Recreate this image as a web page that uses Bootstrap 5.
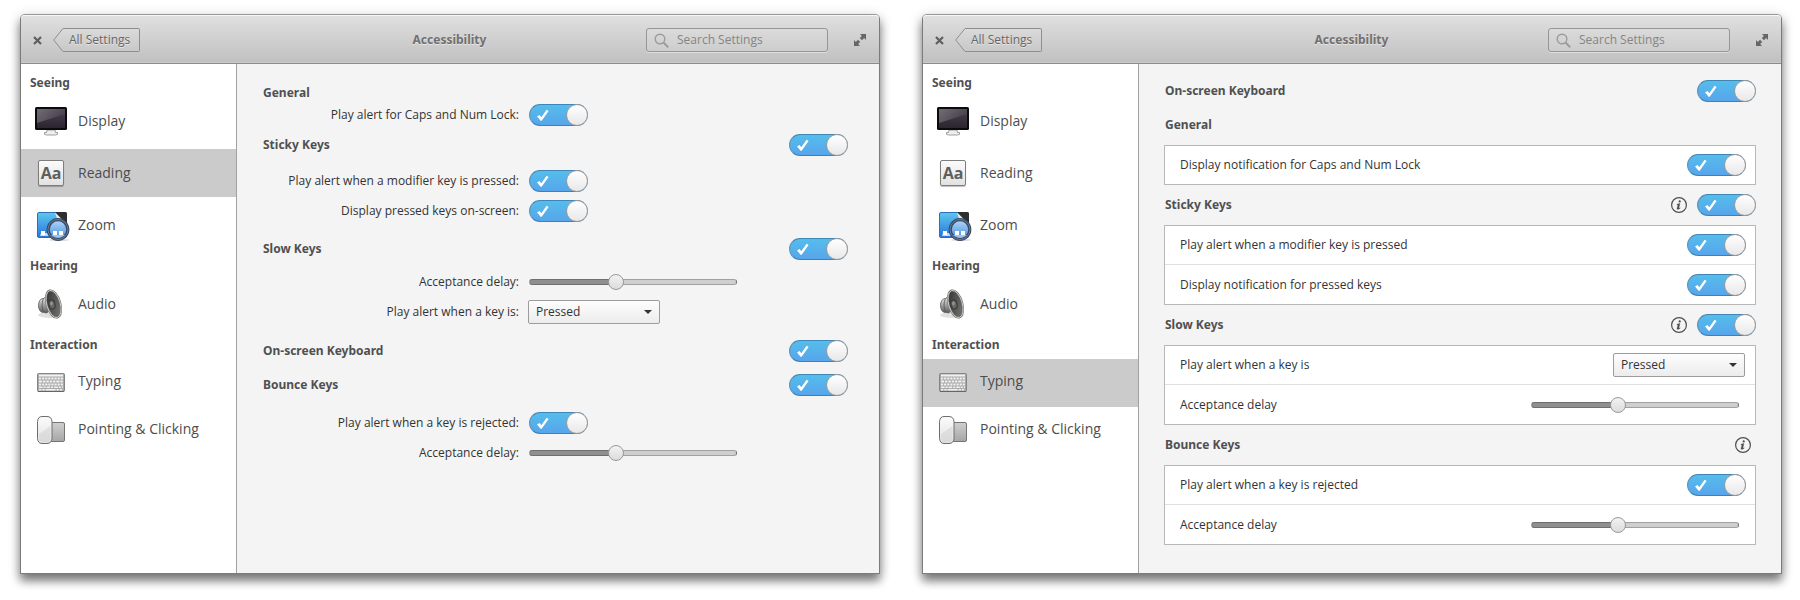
<!DOCTYPE html>
<html lang="en">
<head>
<meta charset="utf-8">
<meta name="viewport" content="width=device-width, initial-scale=1">
<title>Accessibility</title>
<link href="https://cdn.jsdelivr.net/npm/bootstrap@5.3.0/dist/css/bootstrap.min.css" rel="stylesheet">
<style>
body{font-family:"Open Sans","Noto Sans",sans-serif;font-size:12px;line-height:16px;color:#333;background:#fff}
.desk{min-height:100vh;padding:14px 18px 26px 20px;gap:42px}
.win{flex:1 1 0;min-width:0;border:1px solid #7b7b7b;border-top-color:#999;border-radius:5px 5px 0 0;background:#f4f4f4;
  box-shadow:0 7px 10px rgba(0,0,0,.48),0 2px 14px rgba(0,0,0,.16)}
.titlebar{display:grid;grid-template-columns:1fr auto 1fr;height:49px;padding:2px 13px 0 12px;border-bottom:1px solid #8b8b8b;
  border-radius:4px 4px 0 0;background:linear-gradient(#e0e0e0,#c0c0c0);box-shadow:inset 0 1px #f6f6f6,inset 0 -1px #cbcbcb}
.titlebar h1,.side h2,.pane h3{font-family:"Noto Sans","Open Sans",sans-serif;font-size:12px;line-height:16px;font-weight:700}
.titlebar h1{color:#707070;text-shadow:0 1px rgba(255,255,255,.5)}
.plain{border:0;background:none;padding:0;display:flex;color:#666}
.back{border:0;background:none;padding:0 0 0 3px;height:24px;display:flex;color:#666;text-shadow:0 1px rgba(255,255,255,.5)}
.back .face{height:24px;line-height:21px;padding:0 9px 0 6px;border:1px solid #8e8e8e;border-left:0;border-radius:0 2px 2px 0;
  background:linear-gradient(#dadada,#c8c8c8)}
.search{width:182px;height:24px;border:1px solid #969696;border-radius:3px;margin-right:26px;padding:0 8px 0 7px;gap:8px;background:rgba(255,255,255,.1);
  box-shadow:0 1px rgba(255,255,255,.4)}
.search input{border:0;background:none;outline:0;padding:0;min-width:0;flex:1;color:#666}
.search input::placeholder{color:#858585;opacity:1}
.side{flex:0 0 216px;background:#fff;border-right:1px solid #a0a0a0;padding-top:2px}
.side h2{color:#505050;margin:0;padding:9px 9px 6px}
.places{gap:4px}
.places a{height:48px;padding-left:14px;gap:11px;font-size:14px;line-height:20px;color:#4d4d4d;text-decoration:none}
.places a.active{background:#cbcbcb}
.places.tight{gap:0}
.places.tight span{padding-bottom:4px}
.places .glass{margin-right:-4px}
.places .letters{width:26px;height:26px;margin:0 3px;border:1px solid #7d7d7d;border-radius:2px;background:linear-gradient(#fbfbfb,#e2e2e2);
  box-shadow:0 1px 1px rgba(0,0,0,.25);font-size:16px;line-height:24px;font-weight:700;color:#5e5e5e}
.pane{flex:1;min-width:0}
.pane h3{color:#505050;margin:0 0 0 1px}
.rows{padding:21px 31px 0 25px}
.rows .bar{min-height:22px}
.rows section+section{margin-top:16px}
.rows section.near{margin-top:8px}
.rows section.mid{margin-top:12px}
.fields{display:grid;gap:8px 10px;grid-template-columns:257px 1fr;align-items:center;margin-top:14px}
.fields.first{margin-top:3px}
.fields.snug{margin-top:11px;row-gap:7px}
.fields label{text-align:right}
.fields>div{min-height:22px;display:flex;align-items:center}
.boxes{padding:16px 25px 0}
.boxes .bar{min-height:22px;margin-bottom:9px;gap:10px}
.boxes .bar.first{margin-bottom:12px}
.boxes .listbox{margin-bottom:9px;border:1px solid #b8b8b8;background:#fff}
.listbox .opt{min-height:39px;padding:0 9px 0 15px;border-bottom:1px solid #e0e0e0}
.listbox .opt:last-child{border:0}
.listbox .opt:only-child{min-height:38px}
.listbox .slide{margin-right:7px}
.toggle.form-check-input{appearance:none;-webkit-appearance:none;margin:0;float:none;flex:none;width:59px;height:22px;border:1px solid #a5a5a5;border-radius:11px;background-color:#ddd;
  background-image:none;position:relative;display:block}
.toggle.form-check-input:checked{border-color:#3f86b5 #8faabd #3b82b8 #5a95bb;
  background:url("data:image/svg+xml,%3Csvg xmlns='http://www.w3.org/2000/svg' viewBox='0 0 14 13'%3E%3Cpath d='M1 7.5l2.6-1.6 1.7 2.3L10.600 .8l2 1.200L5.700 11.800H4.600z' fill='%23fff'/%3E%3C/svg%3E") 6px 4px/14px 13px no-repeat,linear-gradient(#55bdec,#57a5ea)}
.toggle.form-check-input::after{content:"";position:absolute;top:-1px;left:-1px;width:22px;height:22px;border:1px solid #9b9b9b;border-radius:50%;background:linear-gradient(#fff,#e8e8e8)}
.toggle.form-check-input:checked::after{left:auto;right:-1px}
.slide{appearance:none;-webkit-appearance:none;display:block;width:208px;height:16px;margin:0;background:none}
.slide::-webkit-slider-runnable-track{height:6px;border:1px solid rgba(0,0,0,.22);border-radius:3px;
  background:linear-gradient(90deg,#8f8f8f 41%,#cfcfcf 41%)}
.slide::-webkit-slider-thumb{-webkit-appearance:none;width:16px;height:16px;margin-top:-6px;border:1px solid #9a9a9a;border-radius:50%;background:linear-gradient(#f2f2f2,#dcdcdc)}
.pick.form-select{width:132px;height:24px;padding:0 24px 0 7px;border:1px solid #9c9c9c;border-radius:2px;font-size:12px;line-height:16px;color:#333;
  background:url("data:image/svg+xml,%3Csvg xmlns='http://www.w3.org/2000/svg' viewBox='0 0 8 4'%3E%3Cpath d='M0 0h8L4 4z' fill='%23333'/%3E%3C/svg%3E") right 7px center/8px 4px no-repeat,linear-gradient(#fdfdfd,#ececec)}
.fields .pick{margin-left:-1px}
.listbox .pick{margin-right:1px}
.info-end{margin-right:5px}
</style>
</head>
<body>
<svg width="0" height="0" class="position-absolute" aria-hidden="true">
  <defs>
    <linearGradient id="gScreen" x1="0" y1="0" x2="0" y2="1"><stop offset="0" stop-color="#4a434f"/><stop offset="1" stop-color="#2c2530"/></linearGradient>
    <linearGradient id="gGlare" x1="0" y1="0" x2="1" y2="0"><stop offset="0" stop-color="#fff" stop-opacity=".22"/><stop offset="1" stop-color="#fff" stop-opacity=".04"/></linearGradient>
    <linearGradient id="gPaper" x1="0" y1="0" x2="0" y2="1"><stop offset="0" stop-color="#fbfbfb"/><stop offset="1" stop-color="#e2e2e2"/></linearGradient>
    <linearGradient id="gBlue" x1="0" y1="0" x2="0" y2="1"><stop offset="0" stop-color="#5bc8ec"/><stop offset="1" stop-color="#2a74dd"/></linearGradient>
    <linearGradient id="gLens" x1="0" y1="0" x2="0" y2="1"><stop offset="0" stop-color="#b4d9f8"/><stop offset="1" stop-color="#3e8ce2"/></linearGradient>
    <linearGradient id="gGrey" x1="0" y1="0" x2="0" y2="1"><stop offset="0" stop-color="#cfcfcf"/><stop offset="1" stop-color="#a6a6a6"/></linearGradient>
    <linearGradient id="gCone" x1="0" y1="0" x2="1" y2="1"><stop offset="0" stop-color="#2d2d2b"/><stop offset="1" stop-color="#7c7f78"/></linearGradient>
    <linearGradient id="gMetal" x1="0" y1="0" x2="0" y2="1"><stop offset="0" stop-color="#e8e8e8"/><stop offset=".5" stop-color="#a0a0a0"/><stop offset="1" stop-color="#5c5c5c"/></linearGradient>
    <linearGradient id="gBack" x1="0" y1="0" x2="0" y2="1"><stop offset="0" stop-color="#dadada"/><stop offset="1" stop-color="#c8c8c8"/></linearGradient>
  </defs>
  <symbol id="iDisplay" viewBox="0 0 32 32">
    <path d="M12 25h8l.5 2.500h2q1 2.500-2 2.500h-9q-3 0-2-2.500h2z" fill="#eee" stroke="#8b8b8b" stroke-width=".8"/>
    <rect x="0" y="2" width="32" height="23" rx="1.500" fill="#0c0a0d"/>
    <rect x="2" y="4" width="28" height="19" fill="url(#gScreen)"/>
    <path d="M2 4h28v5L2 18z" fill="url(#gGlare)"/>
  </symbol>
  <symbol id="iZoom" viewBox="0 0 36 32">
    <rect x="2.500" y="3.500" width="29" height="25" rx="1.500" fill="url(#gBlue)" stroke="#2c6fb8"/>
    <path d="M20 3h10.500q1.500 0 1.500 1.500V16z" fill="#2d2f2f"/><path d="M20 3.500l12 12-9-3z" fill="#e9ecec"/>
    <path d="M5 27l1-3h22v3z" fill="#bfe0fa"/><rect x="6" y="22" width="4" height="4" fill="#fff"/>
    <ellipse cx="24" cy="31" rx="10" ry="1" fill="#000" opacity=".15"/>
    <circle cx="23" cy="20.500" r="9.800" fill="url(#gLens)" stroke="#3b4864" stroke-width="3.200"/>
    <circle cx="23" cy="20.500" r="10" fill="none" stroke="#7686a4" stroke-width=".8"/>
    <path d="M16 26h14l-1 1q-6 4-12 0z" fill="#b8daf8" opacity=".7"/>
    <rect x="18" y="22" width="4" height="4" fill="#fff"/><rect x="24" y="22" width="4" height="4" fill="#fff"/>
  </symbol>
  <symbol id="iAudio" viewBox="0 0 32 32">
    <ellipse cx="15" cy="27" rx="12" ry="3" fill="#000" opacity=".12"/>
    <ellipse cx="8" cy="17.500" rx="4.500" ry="7" fill="url(#gMetal)" stroke="#555" stroke-width=".8"/>
    <ellipse cx="11" cy="17" rx="4" ry="8" fill="url(#gMetal)" stroke="#555" stroke-width=".8"/>
    <path d="M13 9l5-6 5 26-8-5z" fill="#555"/>
    <ellipse cx="18.500" cy="16" rx="6.800" ry="14" transform="rotate(-16 18.500 16)" fill="url(#gCone)" stroke="#6d6d6d" stroke-width="2"/>
    <ellipse cx="18.500" cy="16" rx="6.800" ry="14" transform="rotate(-16 18.500 16)" fill="none" stroke="#cdcdcd" stroke-width=".9"/>
    <ellipse cx="17" cy="16.500" rx="3" ry="4.600" transform="rotate(-12 17 16.500)" fill="#666" stroke="#383838"/>
    <ellipse cx="16.500" cy="15.500" rx="1.200" ry="2" fill="#999"/>
  </symbol>
  <symbol id="iTyping" viewBox="0 0 32 32">
    <rect x="2.500" y="6.500" width="27" height="18" rx="1" fill="#a8a8a8" stroke="#858585"/>
    <path d="M3 24.500h26" stroke="#666"/>
    <g stroke="#f2f2f2" stroke-width="2"><path d="M4 8.500h24" stroke-width="2"/><path d="M4 11.500h24" stroke-dasharray="2.200 .9"/><path d="M4 14.500h24" stroke-dasharray="3.200 .9 2.400 .9 2.400 .9 2.400 .9 2.400 .9"/><path d="M4 17.500h24" stroke-dasharray="2.200 .9"/><path d="M4 20.200h24" stroke-dasharray="3.600 .9 2.200 .9" stroke-width="1.600"/><path d="M4 22.700h24" stroke-width="1.600" stroke-dasharray="2.400 .9 2.400 .9 10 .9"/></g>
  </symbol>
  <symbol id="iPointing" viewBox="0 0 32 32">
    <rect x="14.500" y="7.500" width="15" height="19" rx="1.500" fill="url(#gGrey)" stroke="#747474"/>
    <path d="M7 1.500h5q4.500 0 5 5v17q-.5 5-5 5H7q-4 0-4.500-5v-17q.5-5 4.500-5z" fill="url(#gPaper)" stroke="#6e6e6e"/>
    <path d="M4 19L15.500 11v12q-.5 4-4 4H7.500q-3 0-3.500-4z" fill="#d0d0d0" opacity=".5"/>
  </symbol>
  <symbol id="iClose" viewBox="0 0 9 9"><path d="M1 1l7 7M8 1L1 8" stroke="#5f5f5f" stroke-width="2.200" fill="none"/></symbol>
  <symbol id="iTip" viewBox="0 0 10 24"><path d="M10 0L0 12l10 12z" fill="url(#gBack)"/><path d="M10 .5L.700 12 10 23.500" fill="none" stroke="#8e8e8e"/></symbol>
  <symbol id="iFind" viewBox="0 0 15 15"><circle cx="6" cy="6" r="4.800" fill="none" stroke="#9c9c9c" stroke-width="1.400"/><path d="M9.500 9.500l4.700 4.700" stroke="#9c9c9c" stroke-width="2"/></symbol>
  <symbol id="iFull" viewBox="0 0 12 12"><path d="M6 0h6v6L10.100 4.100 8 6.200 5.800 4 7.900 1.900zM0 6l1.900 1.900L4 5.800 6.200 8 4.100 10.100 6 12H0z" fill="#666"/></symbol>
  <symbol id="iInfo" viewBox="0 0 16 16"><circle cx="8" cy="8" r="7.400" fill="none" stroke="#4f4f4f" stroke-width="1.200"/><circle cx="8.700" cy="4.400" r="1.100" fill="#4f4f4f"/><path d="M6.100 7.100l2.900-.5-1.200 4.700 1.400-.6-.2.700-2.100 1.100-1-.4 1-4.200-.9-.2z" fill="#4f4f4f" stroke="#4f4f4f" stroke-width=".3"/></symbol>
</svg>

<main class="desk d-flex">
  <!-- First window: reading -->
  <div class="win d-flex flex-column">
    <header class="titlebar align-items-center">
      <div class="d-flex align-items-center">
        <button class="plain" type="button" aria-label="Close"><svg width="9" height="9"><use href="#iClose"/></svg></button>
        <button class="back ms-2" type="button"><svg width="10" height="24"><use href="#iTip"/></svg><span class="face">All Settings</span></button>
      </div>
      <h1 class="m-0">Accessibility</h1>
      <div class="d-flex align-items-center justify-content-end">
        <div class="search d-flex align-items-center"><svg width="15" height="15"><use href="#iFind"/></svg><input type="search" placeholder="Search Settings" aria-label="Search Settings"></div>
        <button class="plain" type="button" aria-label="Maximize"><svg width="12" height="12"><use href="#iFull"/></svg></button>
      </div>
    </header>
    <div class="d-flex flex-grow-1">
      <nav class="side" aria-label="Categories">
        <h2>Seeing</h2>
        <div class="places d-flex flex-column">
          <a class="d-flex align-items-center" href="#"><svg width="32" height="32"><use href="#iDisplay"/></svg><span>Display</span></a>
          <a class="d-flex align-items-center active" href="#" aria-current="page"><span class="letters d-flex justify-content-center" aria-hidden="true">Aa</span><span>Reading</span></a>
          <a class="d-flex align-items-center" href="#"><svg width="36" height="32" class="glass"><use href="#iZoom"/></svg><span>Zoom</span></a>
        </div>
        <h2>Hearing</h2>
        <div class="places d-flex flex-column">
          <a class="d-flex align-items-center" href="#"><svg width="32" height="32"><use href="#iAudio"/></svg><span>Audio</span></a>
        </div>
        <h2>Interaction</h2>
        <div class="places tight d-flex flex-column">
          <a class="d-flex align-items-center" href="#"><svg width="32" height="32"><use href="#iTyping"/></svg><span>Typing</span></a>
          <a class="d-flex align-items-center" href="#"><svg width="32" height="32"><use href="#iPointing"/></svg><span>Pointing &amp; Clicking</span></a>
        </div>
      </nav>
      <div class="pane rows">
        <section>
          <div class="d-flex"><h3>General</h3></div>
          <div class="fields first">
            <label for="a1">Play alert for Caps and Num Lock:</label><div><input class="form-check-input toggle" type="checkbox" role="switch" id="a1" checked></div>
          </div>
        </section>
        <section class="near">
          <div class="bar d-flex align-items-center justify-content-between"><h3>Sticky Keys</h3><input class="form-check-input toggle" type="checkbox" role="switch" aria-label="Sticky Keys" checked></div>
          <div class="fields">
            <label for="a2">Play alert when a modifier key is pressed:</label><div><input class="form-check-input toggle" type="checkbox" role="switch" id="a2" checked></div>
            <label for="a3">Display pressed keys on-screen:</label><div><input class="form-check-input toggle" type="checkbox" role="switch" id="a3" checked></div>
          </div>
        </section>
        <section>
          <div class="bar d-flex align-items-center justify-content-between"><h3>Slow Keys</h3><input class="form-check-input toggle" type="checkbox" role="switch" aria-label="Slow Keys" checked></div>
          <div class="fields snug">
            <label for="a4">Acceptance delay:</label><div><input class="slide" type="range" id="a4" value="41"></div>
            <label for="a5">Play alert when a key is:</label><div><select class="form-select pick" id="a5"><option>Pressed</option><option>Accepted</option><option>Rejected</option></select></div>
          </div>
        </section>
        <section>
          <div class="bar d-flex align-items-center justify-content-between"><h3>On-screen Keyboard</h3><input class="form-check-input toggle" type="checkbox" role="switch" aria-label="On-screen Keyboard" checked></div>
        </section>
        <section class="mid">
          <div class="bar d-flex align-items-center justify-content-between"><h3>Bounce Keys</h3><input class="form-check-input toggle" type="checkbox" role="switch" aria-label="Bounce Keys" checked></div>
          <div class="fields mt-3">
            <label for="a6">Play alert when a key is rejected:</label><div><input class="form-check-input toggle" type="checkbox" role="switch" id="a6" checked></div>
            <label for="a7">Acceptance delay:</label><div><input class="slide" type="range" id="a7" value="41"></div>
          </div>
        </section>
      </div>
    </div>
  </div>

  <!-- Second window: typing -->
  <div class="win d-flex flex-column">
    <header class="titlebar align-items-center">
      <div class="d-flex align-items-center">
        <button class="plain" type="button" aria-label="Close"><svg width="9" height="9"><use href="#iClose"/></svg></button>
        <button class="back ms-2" type="button"><svg width="10" height="24"><use href="#iTip"/></svg><span class="face">All Settings</span></button>
      </div>
      <h1 class="m-0">Accessibility</h1>
      <div class="d-flex align-items-center justify-content-end">
        <div class="search d-flex align-items-center"><svg width="15" height="15"><use href="#iFind"/></svg><input type="search" placeholder="Search Settings" aria-label="Search Settings"></div>
        <button class="plain" type="button" aria-label="Maximize"><svg width="12" height="12"><use href="#iFull"/></svg></button>
      </div>
    </header>
    <div class="d-flex flex-grow-1">
      <nav class="side" aria-label="Categories">
        <h2>Seeing</h2>
        <div class="places d-flex flex-column">
          <a class="d-flex align-items-center" href="#"><svg width="32" height="32"><use href="#iDisplay"/></svg><span>Display</span></a>
          <a class="d-flex align-items-center" href="#"><span class="letters d-flex justify-content-center" aria-hidden="true">Aa</span><span>Reading</span></a>
          <a class="d-flex align-items-center" href="#"><svg width="36" height="32" class="glass"><use href="#iZoom"/></svg><span>Zoom</span></a>
        </div>
        <h2>Hearing</h2>
        <div class="places d-flex flex-column">
          <a class="d-flex align-items-center" href="#"><svg width="32" height="32"><use href="#iAudio"/></svg><span>Audio</span></a>
        </div>
        <h2>Interaction</h2>
        <div class="places tight d-flex flex-column">
          <a class="d-flex align-items-center active" href="#" aria-current="page"><svg width="32" height="32"><use href="#iTyping"/></svg><span>Typing</span></a>
          <a class="d-flex align-items-center" href="#"><svg width="32" height="32"><use href="#iPointing"/></svg><span>Pointing &amp; Clicking</span></a>
        </div>
      </nav>
      <div class="pane boxes">
        <div class="bar first d-flex align-items-center justify-content-between"><h3>On-screen Keyboard</h3><input class="form-check-input toggle" type="checkbox" role="switch" aria-label="On-screen Keyboard" checked></div>
        <div class="bar d-flex align-items-center"><h3>General</h3></div>
        <div class="listbox">
          <div class="opt d-flex align-items-center justify-content-between"><label for="b1">Display notification for Caps and Num Lock</label><input class="form-check-input toggle" type="checkbox" role="switch" id="b1" checked></div>
        </div>
        <div class="bar d-flex align-items-center"><h3 class="me-auto">Sticky Keys</h3><button class="plain" type="button" aria-label="About Sticky Keys"><svg width="16" height="16"><use href="#iInfo"/></svg></button><input class="form-check-input toggle" type="checkbox" role="switch" aria-label="Sticky Keys" checked></div>
        <div class="listbox">
          <div class="opt d-flex align-items-center justify-content-between"><label for="b2">Play alert when a modifier key is pressed</label><input class="form-check-input toggle" type="checkbox" role="switch" id="b2" checked></div>
          <div class="opt d-flex align-items-center justify-content-between"><label for="b3">Display notification for pressed keys</label><input class="form-check-input toggle" type="checkbox" role="switch" id="b3" checked></div>
        </div>
        <div class="bar d-flex align-items-center"><h3 class="me-auto">Slow Keys</h3><button class="plain" type="button" aria-label="About Slow Keys"><svg width="16" height="16"><use href="#iInfo"/></svg></button><input class="form-check-input toggle" type="checkbox" role="switch" aria-label="Slow Keys" checked></div>
        <div class="listbox">
          <div class="opt d-flex align-items-center justify-content-between"><label for="b4">Play alert when a key is</label><select class="form-select pick" id="b4"><option>Pressed</option><option>Accepted</option><option>Rejected</option></select></div>
          <div class="opt d-flex align-items-center justify-content-between"><label for="b5">Acceptance delay</label><input class="slide" type="range" id="b5" value="41"></div>
        </div>
        <div class="bar d-flex align-items-center"><h3 class="me-auto">Bounce Keys</h3><button class="plain info-end" type="button" aria-label="About Bounce Keys"><svg width="16" height="16"><use href="#iInfo"/></svg></button></div>
        <div class="listbox">
          <div class="opt d-flex align-items-center justify-content-between"><label for="b6">Play alert when a key is rejected</label><input class="form-check-input toggle" type="checkbox" role="switch" id="b6" checked></div>
          <div class="opt d-flex align-items-center justify-content-between"><label for="b7">Acceptance delay</label><input class="slide" type="range" id="b7" value="41"></div>
        </div>
      </div>
    </div>
  </div>
</main>
<script src="https://cdn.jsdelivr.net/npm/bootstrap@5.3.0/dist/js/bootstrap.bundle.min.js"></script>
</body>
</html>
